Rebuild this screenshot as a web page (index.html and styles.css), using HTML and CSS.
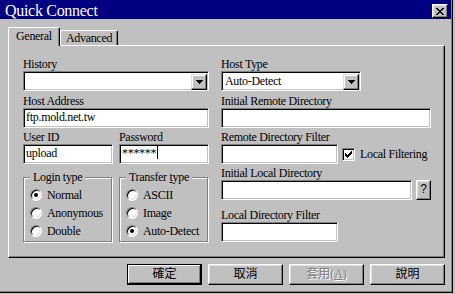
FILE: index.html
```html
<!DOCTYPE html>
<html lang="zh-Hant">
  <head>
    <meta charset="UTF-8" />
    <title>Quick Connect</title>
    <link rel="stylesheet" href="styles.css">
  </head>
  <body>
    <div class="window">
      <div class="titlebar">
        <span class="title">Quick Connect</span>
        <span class="close-btn">
          <svg width="8" height="7" viewBox="0 0 8 7" shape-rendering="crispEdges"><path d="M0 0h2v1h-2z M6 0h2v1h-2z M1 1h2v1h-2z M5 1h2v1h-2z M2 2h4v1h-4z M3 3h2v1h-2z M2 4h4v1h-4z M1 5h2v1h-2z M5 5h2v1h-2z M0 6h2v1h-2z M6 6h2v1h-2z" fill="#000"/></svg>
        </span>
      </div>

      <div class="tabs">
        <div class="tab active">General</div>
        <div class="tab">Advanced</div>
      </div>

      <div class="panel">
        <div class="column left-col">
          <div class="field">
            <span class="label">History</span>
            <div class="combo history">
              <span class="combo-text"></span>
              <span class="drop-btn"><svg width="7" height="4" viewBox="0 0 7 4" shape-rendering="crispEdges"><path d="M0 0h7v1h-1v1h-1v1h-1v1h-1v-1h-1v-1h-1v-1h-1z" fill="#000"/></svg></span>
            </div>
          </div>
          <div class="field">
            <span class="label">Host Address</span>
            <div class="textbox">ftp.mold.net.tw</div>
          </div>
          <div class="field-row">
            <div class="field user-id">
              <span class="label">User ID</span>
              <div class="textbox">upload</div>
            </div>
            <div class="field password">
              <span class="label">Password</span>
              <div class="textbox">******<span class="caret"></span></div>
            </div>
          </div>
          <div class="group-row">
            <fieldset class="group">
              <legend>Login type</legend>
              <div class="radio-item"><span class="radio checked"></span>Normal</div>
              <div class="radio-item"><span class="radio"></span>Anonymous</div>
              <div class="radio-item"><span class="radio"></span>Double</div>
            </fieldset>
            <fieldset class="group">
              <legend>Transfer <u>t</u>ype</legend>
              <div class="radio-item"><span class="radio"></span>ASCII</div>
              <div class="radio-item"><span class="radio"></span>Image</div>
              <div class="radio-item"><span class="radio checked"></span>Auto-Detect</div>
            </fieldset>
          </div>
        </div>

        <div class="column right-col">
          <div class="field">
            <span class="label">Host Type</span>
            <div class="combo host-type">
              <span class="combo-text">Auto-Detect</span>
              <span class="drop-btn"><svg width="7" height="4" viewBox="0 0 7 4" shape-rendering="crispEdges"><path d="M0 0h7v1h-1v1h-1v1h-1v1h-1v-1h-1v-1h-1v-1h-1z" fill="#000"/></svg></span>
            </div>
          </div>
          <div class="field">
            <span class="label">Initial Remote Directory</span>
            <div class="textbox"></div>
          </div>
          <div class="field">
            <span class="label">Remote Directory Filter</span>
            <div class="inline-row">
              <div class="textbox short"></div>
              <span class="checkbox">
                <svg width="7" height="7" viewBox="0 0 7 7" shape-rendering="crispEdges"><path d="M6 0h1v1h-1z M5 1h2v1h-2z M0 2h1v1h-1z M4 2h3v1h-3z M0 3h2v1h-2z M3 3h3v1h-3z M0 4h5v1h-5z M1 5h3v1h-3z M2 6h1v1h-1z" fill="#000"/></svg>
              </span>
              <span class="check-label">Local Filtering</span>
            </div>
          </div>
          <div class="field">
            <span class="label">Initial Local Directory</span>
            <div class="inline-row">
              <div class="textbox local-dir"></div>
              <span class="small-btn">?</span>
            </div>
          </div>
          <div class="field spaced">
            <span class="label">Local Directory Filter</span>
            <div class="textbox short"></div>
          </div>
        </div>
      </div>

      <div class="buttons">
        <div class="btn default">確定</div>
        <div class="btn">取消</div>
        <div class="btn disabled">套用(<u>A</u>)</div>
        <div class="btn">說明</div>
      </div>
    </div>
  </body>
</html>
```

FILE: styles.css
```css
body {
  margin: 0;
  background-color: #c0c0c0;
  font-family: "Liberation Serif", "Noto Sans CJK TC", serif;
  font-size: 12px;
  color: #000;
  overflow: hidden;
}
.window {
  width: 453px;
  height: 293px;
  box-sizing: border-box;
  border-right: 1px solid #000;
  border-bottom: 1px solid #000;
  box-shadow: inset -1px -1px #808080;
}
.titlebar {
  height: 19px;
  margin-right: 1px;
  background-color: #000080;
  color: #fff;
  display: flex;
  align-items: flex-start;
}
.title {
  font-size: 16px;
  line-height: 16px;
  padding: 3px 0 0 5px;
  letter-spacing: -0.3px;
}
.close-btn {
  margin: 4px 3px 0 auto;
  width: 16px;
  height: 14px;
  box-sizing: border-box;
  background-color: #c0c0c0;
  border: 1px solid;
  border-color: #fff #000 #000 #fff;
  box-shadow: inset -1px -1px #808080, inset 1px 1px #dfdfdf;
  display: flex;
  align-items: center;
  justify-content: center;
}

/* tabs */
.tabs {
  display: flex;
  align-items: flex-end;
  height: 18px;
  margin: 8px 0 0 8px;
}
.tab {
  height: 15px;
  box-sizing: border-box;
  padding: 1px 5px 0;
  line-height: 13px;
  letter-spacing: -0.3px;
  border: 1px solid;
  border-bottom: none;
  border-color: #fff #000 #000 #fff;
  border-top-left-radius: 2px;
  border-top-right-radius: 2px;
  box-shadow: inset -1px 0 #808080;
}
.tab.active {
  position: relative;
  height: 19px;
  margin-bottom: -1px;
  padding: 2px 7px 0;
  background-color: #c0c0c0;
}

/* main panel */
.panel {
  width: 437px;
  height: 213px;
  margin-left: 8px;
  box-sizing: border-box;
  border: 1px solid;
  border-color: #fff #000 #000 #fff;
  box-shadow: inset -1px -1px #808080;
  padding: 9px 0 0 14px;
  display: flex;
  gap: 12px;
}
.column {
  display: flex;
  flex-direction: column;
}
.left-col {
  width: 186px;
}
.right-col {
  width: 210px;
}
.field {
  display: flex;
  flex-direction: column;
}
.field.spaced {
  margin-top: 6px;
}
.label {
  height: 16px;
  box-sizing: border-box;
  padding-top: 3px;
  line-height: 13px;
  letter-spacing: -0.3px;
  white-space: nowrap;
}
.field-row {
  display: flex;
  gap: 6px;
}
.user-id {
  width: 90px;
}
.password {
  width: 90px;
}

/* sunken boxes */
.textbox,
.combo,
.checkbox {
  background-color: #fff;
  box-sizing: border-box;
  border: 1px solid;
  border-color: #808080 #fff #fff #808080;
  box-shadow: inset 1px 1px #000, inset -1px -1px #c0c0c0;
}
.textbox {
  height: 20px;
  padding: 1px 1px 0 2px;
  line-height: 15px;
  white-space: nowrap;
  letter-spacing: -0.3px;
}
.textbox.short {
  width: 117px;
}
.textbox.local-dir {
  width: 192px;
}
.caret {
  display: inline-block;
  width: 1px;
  height: 13px;
  margin-left: 1px;
  vertical-align: -2px;
  background-color: #000;
}
.combo {
  height: 20px;
  margin-bottom: 1px;
  padding: 1px;
  display: flex;
}
.combo.host-type {
  width: 140px;
}
.combo-text {
  flex: 1;
  padding: 1px 0 0 2px;
  line-height: 15px;
  letter-spacing: -0.3px;
}
.drop-btn {
  width: 16px;
  height: 16px;
  margin: 1px 0 0;
  box-sizing: border-box;
  background-color: #c0c0c0;
  border: 1px solid;
  border-color: #dfdfdf #000 #000 #dfdfdf;
  box-shadow: inset -1px -1px #808080, inset 1px 1px #fff;
  display: flex;
  align-items: center;
  justify-content: center;
}
.inline-row {
  display: flex;
  align-items: center;
}
.checkbox {
  width: 13px;
  height: 13px;
  margin-left: 4px;
  display: flex;
  align-items: center;
  justify-content: center;
}
.check-label {
  margin-left: 5px;
  letter-spacing: -0.3px;
  white-space: nowrap;
}
.small-btn {
  width: 15px;
  height: 20px;
  margin-left: 4px;
  box-sizing: border-box;
  border: 1px solid;
  border-color: #fff #000 #000 #fff;
  box-shadow: inset -1px -1px #808080, inset 1px 1px #dfdfdf;
  font-family: "Liberation Sans", sans-serif;
  font-size: 12px;
  line-height: 17px;
  text-align: center;
}

/* group boxes */
.group-row {
  display: flex;
  gap: 7px;
  margin-top: 7px;
}
.group {
  width: 89px;
  height: 71px;
  margin: 0;
  box-sizing: border-box;
  padding: 2px 0 1px 6px;
  border: 1px solid #808080;
  box-shadow: inset 1px 1px #fff, 1px 1px #fff;
}
.group legend {
  padding: 0 3px;
  line-height: 13px;
  letter-spacing: -0.3px;
  background-color: #c0c0c0;
}
.radio-item {
  height: 18px;
  display: flex;
  align-items: center;
  gap: 5px;
  letter-spacing: -0.3px;
  white-space: nowrap;
}
.radio {
  position: relative;
  width: 12px;
  height: 12px;
  box-sizing: border-box;
  border-radius: 50%;
  background-color: #fff;
  border: 1px solid;
  border-color: #808080 #fff #fff #808080;
  box-shadow: inset 1px 1px #000, inset -1px -1px #dfdfdf;
}
.radio.checked::after {
  content: "";
  position: absolute;
  left: 3px;
  top: 3px;
  width: 4px;
  height: 4px;
  border-radius: 50%;
  background-color: #000;
}

/* bottom buttons */
.buttons {
  width: 437px;
  margin: 6px 0 0 8px;
  display: flex;
  justify-content: flex-end;
  gap: 6px;
}
.btn {
  width: 75px;
  height: 21px;
  box-sizing: border-box;
  border: 1px solid;
  border-color: #fff #000 #000 #fff;
  box-shadow: inset -1px -1px #808080, inset 1px 1px #dfdfdf;
  font-size: 12px;
  line-height: 19px;
  text-align: center;
}
.btn.default {
  border-color: #000;
  box-shadow: inset -1px -1px #000, inset 1px 1px #fff, inset -2px -2px #808080;
}
.btn.disabled {
  color: #808080;
  text-shadow: 1px 1px #fff;
}
```
